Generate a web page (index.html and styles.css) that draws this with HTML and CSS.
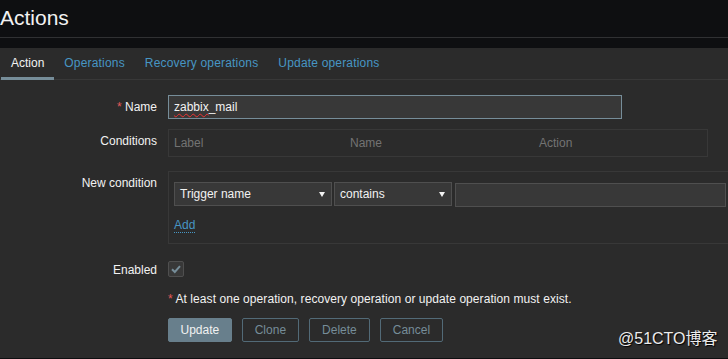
FILE: index.html
```html
<!DOCTYPE html>
<html lang="en">
<head>
  <meta charset="UTF-8">
  <meta name="viewport" content="width=device-width, initial-scale=1.0">
  <title>Actions</title>
  <link rel="stylesheet" href="styles.css">
</head>
<body>
  <header class="page-title">
    <h1>Actions</h1>
  </header>

  <div class="panel">
    <nav class="tabs">
      <a class="tab active" href="#">Action</a>
      <a class="tab" href="#">Operations</a>
      <a class="tab" href="#">Recovery operations</a>
      <a class="tab" href="#">Update operations</a>
    </nav>

    <form class="form">
      <div class="row row-name">
        <label class="label"><span class="req">*</span> Name</label>
        <div class="field">
          <div class="textbox focused"><span class="typo">zabbix</span>_mail</div>
        </div>
      </div>

      <div class="row row-cond">
        <label class="label">Conditions</label>
        <div class="field">
          <div class="cond-table">
            <span>Label</span>
            <span>Name</span>
            <span>Action</span>
          </div>
        </div>
      </div>

      <div class="row row-new">
        <label class="label">New condition</label>
        <div class="field">
          <div class="new-box">
            <div class="controls">
              <div class="select select-type">Trigger name<span class="arrow"></span></div>
              <div class="select select-op">contains<span class="arrow"></span></div>
              <div class="textbox plain"></div>
            </div>
            <a class="add-link" href="#">Add</a>
          </div>
        </div>
      </div>

      <div class="row row-enabled">
        <label class="label">Enabled</label>
        <div class="field">
          <span class="checkbox">
            <svg width="14" height="14" viewBox="0 0 14 14">
              <path d="M3 7.2 L5.8 10 L11 4.2" fill="none" stroke="#768d99" stroke-width="2"/>
            </svg>
          </span>
        </div>
      </div>

      <div class="row row-note">
        <div class="label"></div>
        <div class="field note"><span class="req">*</span> At least one operation, recovery operation or update operation must exist.</div>
      </div>

      <div class="row row-buttons">
        <div class="label"></div>
        <div class="field buttons">
          <button type="button" class="btn primary">Update</button>
          <button type="button" class="btn alt">Clone</button>
          <button type="button" class="btn alt">Delete</button>
          <button type="button" class="btn alt">Cancel</button>
        </div>
      </div>
    </form>
  </div>

  <div class="watermark">@51CTO博客</div>
</body>
</html>
```

FILE: styles.css
```css
/* Base */
html, body {
  margin: 0;
  padding: 0;
  background-color: #0e0f11;
  overflow: hidden;
}
body {
  font-family: "Liberation Sans", Arial, sans-serif;
  font-size: 12px;
  color: #f2f2f2;
  height: 359px;
}

/* Title bar */
.page-title {
  height: 37px;
  border-bottom: 1px solid #303133;
  margin-bottom: 10px;
  display: flex;
  align-items: center;
}
.page-title h1 {
  margin: 0;
  font-size: 21px;
  font-weight: normal;
  line-height: 24px;
  color: #f2f2f2;
  padding-bottom: 2px;
}

/* Panel with tabs */
.panel {
  background-color: #2b2b2b;
  height: 310px;
}
.tabs {
  display: flex;
  height: 31px;
  border-bottom: 1px solid #383838;
  padding-left: 1px;
}
.tab {
  padding: 0 10px;
  line-height: 31px;
  color: #4796c4;
  text-decoration: none;
  letter-spacing: 0.18px;
}
.tab.active {
  color: #f2f2f2;
  border-bottom: 3px solid #768d99;
  line-height: 30px;
  height: 29px;
  letter-spacing: 0;
}

/* Form grid */
.form {
  padding-top: 15px;
}
.row {
  display: grid;
  grid-template-columns: 157px 1fr;
  column-gap: 11px;
}
.label {
  text-align: right;
  line-height: 14px;
  padding-top: 5px;
  color: #f2f2f2;
}
.req {
  color: #e45959;
}
.row-cond { margin-top: 10px; }
.row-new { margin-top: 14px; }
.row-enabled { margin-top: 17px; align-items: center; }
.row-enabled .label { padding-top: 1px; }
.row-note { margin-top: 15px; }
.row-buttons { margin-top: 12px; }

/* Inputs */
.textbox {
  box-sizing: border-box;
  height: 24px;
  line-height: 22px;
  padding: 0 5px;
  background-color: #383838;
  border: 1px solid #4f4f4f;
  color: #f2f2f2;
}
.textbox.focused {
  width: 454px;
  border-color: #768d99;
}
.typo {
  text-decoration: underline wavy #e33;
  text-decoration-thickness: 1px;
  text-underline-offset: 2px;
}
.textbox.plain {
  width: 271px;
  margin-top: 1px;
}

/* Conditions table */
.cond-table {
  box-sizing: border-box;
  width: 540px;
  border: 1px solid #383838;
  padding: 6px 5px;
  display: grid;
  grid-template-columns: 176px 189px 1fr;
  line-height: 14px;
  color: #737373;
}

/* New condition box */
.new-box {
  width: 570px;
  border: 1px solid #383838;
  padding: 10px 5px 10px 5px;
}
.controls {
  display: flex;
}
.select {
  box-sizing: border-box;
  position: relative;
  height: 24px;
  line-height: 22px;
  padding: 0 5px;
  background-color: #383838;
  border: 1px solid #4f4f4f;
}
.select-type { width: 158px; margin-right: 2px; }
.select-op { width: 118px; margin-right: 3px; }
.arrow {
  position: absolute;
  right: 6px;
  top: 9px;
  border-left: 3.5px solid transparent;
  border-right: 3.5px solid transparent;
  border-top: 5px solid #f2f2f2;
}
.add-link {
  display: inline-block;
  margin-top: 11px;
  line-height: 14px;
  color: #4796c4;
  text-decoration: none;
  border-bottom: 1px dotted #4796c4;
}

/* Checkbox */
.checkbox {
  box-sizing: border-box;
  display: flex;
  align-items: center;
  justify-content: center;
  width: 16px;
  height: 16px;
  background-color: #383838;
  border: 1px solid #4f4f4f;
  border-radius: 2px;
}

/* Note */
.note {
  line-height: 14px;
  letter-spacing: 0.07px;
}

/* Buttons */
.buttons {
  display: flex;
  gap: 10px;
}
.btn {
  height: 24px;
  padding: 0 12px;
  font-family: "Liberation Sans", Arial, sans-serif;
  font-size: 12px;
  border: 1px solid #768d99;
  border-radius: 2px;
}
.btn.primary {
  padding: 0 11.5px;
  background-color: #687f8c;
  border-color: #687f8c;
  color: #f2f2f2;
}
.btn.alt {
  background-color: transparent;
  border-color: #526a77;
  color: #768d99;
}

/* Watermark overlay */
.watermark {
  position: absolute;
  left: 618px;
  top: 331px;
  font-family: "Liberation Sans", "Noto Sans CJK SC", sans-serif;
  font-size: 16px;
  line-height: 16px;
  color: #ececec;
  text-shadow: 1px 1px 1px #000;
}
```
